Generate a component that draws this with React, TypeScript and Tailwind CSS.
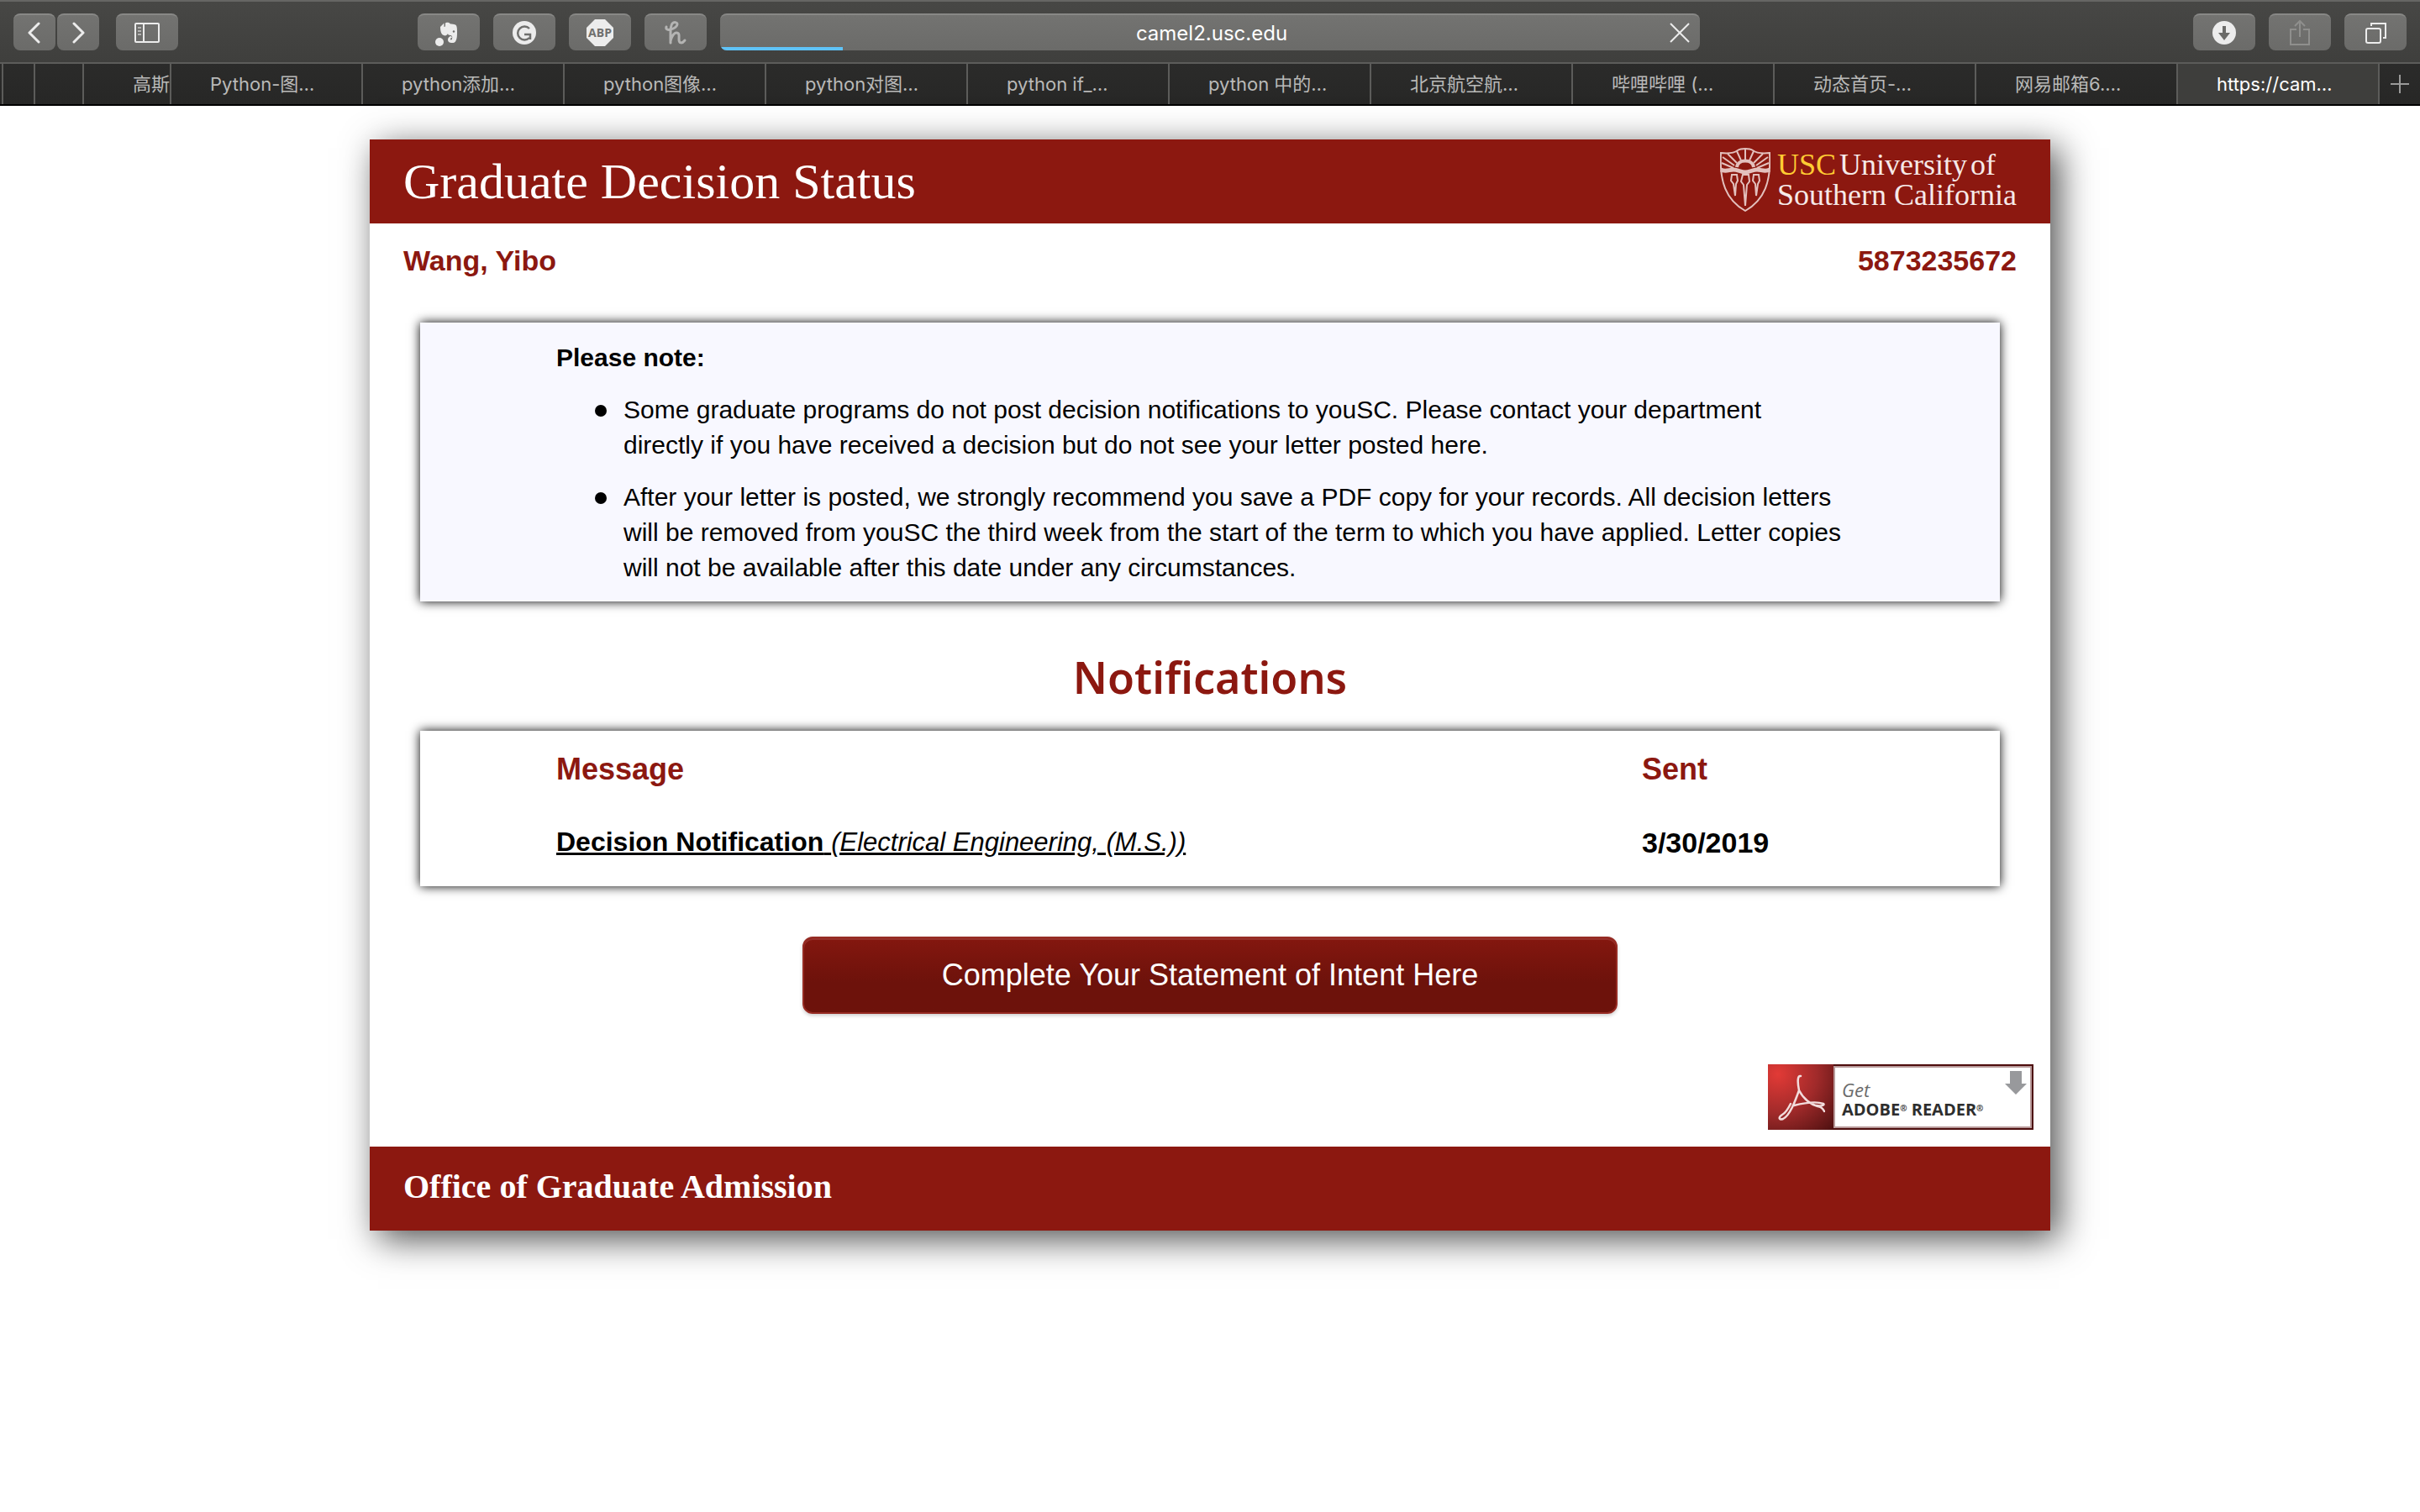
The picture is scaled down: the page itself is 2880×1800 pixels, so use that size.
import type { ReactNode } from "react";

const toolBtn =
  "flex h-11 items-center justify-center rounded-lg border-t-2 border-[#888886] bg-gradient-to-b from-[#737371] to-[#6b6b69] text-[#ececec]";

function ToolButton({ label, className, children }: { label: string; className: string; children: ReactNode }) {
  return (
    <button type="button" aria-label={label} className={`${toolBtn} ${className}`}>
      {children}
    </button>
  );
}

const tabs = [
  "Python-图…",
  "python添加…",
  "python图像…",
  "python对图…",
  "python if_…",
  "python 中的…",
  "北京航空航…",
  "哔哩哔哩 (…",
  "动态首页-…",
  "网易邮箱6.…",
  "https://cam…",
];

function Toolbar() {
  return (
    <div className="flex h-[74px] items-center border-t-2 border-[#666664] bg-gradient-to-b from-[#474745] to-[#3f3f3d] px-4">
      <div className="flex gap-[2px]">
        <ToolButton label="Back" className="w-[50px]">
          <svg width="18" height="26" viewBox="0 0 18 26" fill="none" stroke="currentColor" strokeWidth="3" strokeLinecap="round" strokeLinejoin="round">
            <path d="M14 2L3 13l11 11" />
          </svg>
        </ToolButton>
        <ToolButton label="Forward" className="w-[50px]">
          <svg width="18" height="26" viewBox="0 0 18 26" fill="none" stroke="currentColor" strokeWidth="3" strokeLinecap="round" strokeLinejoin="round">
            <path d="M4 2l11 11L4 24" />
          </svg>
        </ToolButton>
      </div>
      <ToolButton label="Show sidebar" className="ml-5 w-[74px]">
        <svg width="32" height="26" viewBox="0 0 32 26" fill="none" stroke="currentColor" strokeWidth="2">
          <rect x="2" y="2" width="28" height="22" rx="1" />
          <path d="M12 2v22" />
          <path d="M5 7h4M5 11h4M5 15h4" stroke="#b4b4b3" />
        </svg>
      </ToolButton>
      <div className="ml-[285px] flex gap-4">
        <ToolButton label="Clipper" className="w-[74px]">
          <svg width="36" height="32" viewBox="-18 -16 36 32" fill="currentColor">
            <path d="M-4 -11.500c1-1 5-1 6 1 2 0 4 0 6 1 2 1 2 5 2 8 0 5 0 9-2 12-1 1-2 1.500-4 1.500-3 0-5-1-5-4 0-2 2-4 4-4l1 2c-2 0-2 1-2 2 1 1 2 0 2-1 1-3-1-4-2-4-2 0-3-1-3-2-1 2-3 3-5 2-3-1-4-5-4-10h5c1 0 1-1 1-4.500z" />
            <path d="M-10 -7l4.500-4.500v4.500z" />
            <circle cx="6" cy="-1.500" r="1.200" fill="#6f6f6d" />
            <circle cx="-11" cy="11" r="5" />
          </svg>
        </ToolButton>
        <ToolButton label="Grammar check" className="w-[74px]">
          <svg width="30" height="30" viewBox="0 0 30 30">
            <circle cx="15" cy="15" r="14" fill="currentColor" />
            <path d="M21 10a8 8 0 1 0 0 11M15 17h7v6" fill="none" stroke="#6f6f6d" strokeWidth="2.500" />
          </svg>
        </ToolButton>
        <ToolButton label="Ad block" className="w-[74px]">
          <svg width="32" height="32" viewBox="0 0 32 32">
            <path d="M10 0h12l10 10v12L22 32H10L0 22V10z" fill="currentColor" />
            <text x="16" y="21" textAnchor="middle" fontFamily="Open Sans, sans-serif" fontWeight="700" fontSize="14" fill="#6f6f6d">ABP</text>
          </svg>
        </ToolButton>
        <ToolButton label="Coupons" className="w-[74px]">
          <svg width="30" height="32" viewBox="-15 -16 30 32" fill="none" stroke="#b4b4b3" strokeWidth="3" strokeLinecap="round" strokeLinejoin="round">
            <path d="M-11 -7c-1 3 2 4 5 3 5-1 8-4 8-6 0-3-4-3-6-1-2 3-2 7-2 11v12M-6 10c1-5 4-10 7-10 4 0 3 4 3 8 0 5 4 5 7 1" />
          </svg>
        </ToolButton>
      </div>
      <div className="relative mx-4 flex h-11 w-[1166px] items-center overflow-hidden rounded-lg border-t-2 border-[#888886] bg-gradient-to-b from-[#737371] to-[#6b6b69]">
        <input
          aria-label="Address"
          defaultValue="camel2.usc.edu"
          className="h-full w-full bg-transparent pl-1 text-center font-['Inter','Liberation_Sans',sans-serif] text-2xl text-white outline-none"
        />
        <button type="button" aria-label="Stop loading" className="absolute right-3 text-[#ececec]">
          <svg width="24" height="24" viewBox="0 0 24 24" fill="none" stroke="currentColor" strokeWidth="2">
            <path d="M1 1l22 22M23 1L1 23" />
          </svg>
        </button>
        <div className="absolute bottom-0 left-0 h-1 w-[146px] bg-[#5fc3f8]" />
      </div>
      <div className="ml-auto flex gap-4">
        <ToolButton label="Downloads" className="w-[74px]">
          <svg width="28" height="28" viewBox="0 0 28 28">
            <circle cx="14" cy="14" r="14" fill="currentColor" />
            <path d="M12 6h4v8h5l-7 9-7-9h5z" fill="#6b6b69" />
          </svg>
        </ToolButton>
        <ToolButton label="Share" className="w-[74px]">
          <svg width="24" height="32" viewBox="0 0 24 32" fill="none" stroke="#8f8f8d" strokeWidth="2">
            <path d="M8 12H1v18h22V12h-7M12 21V2M6 8l6-6 6 6" />
          </svg>
        </ToolButton>
        <ToolButton label="Show all tabs" className="w-[74px]">
          <svg width="26" height="26" viewBox="0 0 26 26" fill="none" stroke="currentColor" strokeWidth="2">
            <rect x="2" y="8" width="17" height="17" rx="2" />
            <path d="M8 5V2h17v17h-3" />
          </svg>
        </ToolButton>
      </div>
    </div>
  );
}

function TabBar() {
  return (
    <nav className="flex h-[52px] border-t-2 border-b-2 border-t-[#5c5c5a] border-b-black bg-gradient-to-b from-[#2b2b2a] to-[#272726] font-['Inter','Noto_Sans_CJK_SC',sans-serif] text-[22px] text-[#b9b9b8]">
      <div className="w-1 border-r-2 border-[#5c5c5a]" />
      <div className="w-[38px] border-r-2 border-[#5c5c5a]" />
      <div className="w-[58px] border-r-2 border-[#5c5c5a]" />
      <button type="button" className="flex w-[104px] items-center justify-end overflow-hidden border-r-2 border-[#5c5c5a] whitespace-nowrap">
        高斯
      </button>
      {tabs.map((t, i) => (
        <button
          key={t}
          type="button"
          className={`min-w-0 overflow-hidden border-r-2 border-[#5c5c5a] pl-[46px] text-left whitespace-nowrap ${
            i === 0 ? "w-[228px]" : "flex-1"
          } ${i === tabs.length - 1 ? "bg-[#3e3e3c] text-white" : ""}`}
        >
          {t}
        </button>
      ))}
      <button type="button" aria-label="New tab" className="flex w-12 items-center justify-center">
        <svg width="22" height="22" viewBox="0 0 22 22" stroke="#9a9a99" strokeWidth="2">
          <path d="M11 0v22M0 11h22" />
        </svg>
      </button>
    </nav>
  );
}

function UscLogo() {
  return (
    <div className="flex items-start gap-2">
      <svg width="60" height="76" viewBox="0 0 60 76" fill="none" stroke="#e3c0bd" strokeWidth="2">
        <path d="M1 6c9 1 16 0 20-3 3-2 6-2 9-2s6 0 9 2c4 3 11 4 20 3 2 34-6 56-29 69C7 62-1 40 1 6z" />
        <path d="M1 26c5 3 10 0 15 0s9 3 14 3 9-3 14-3 10 3 15 0" strokeWidth="5" />
        <path d="M20 23c1-10 19-10 20 0" strokeWidth="4" />
        <path d="M30 14V2M25 15L20 4M35 15l5-11M20 18L9 7M40 18L51 7M17 21L3 11M43 21l14-10M16 24L2 18M44 24l14-6" strokeWidth="2" />
        <path d="M14 32h6l1 7-2 4-1 14-2-14-3-4zM27 32h7l1 8-3 4-2 25-2-25-3-4zM40 32h6l1 7-2 4-2 14-1-14-3-4z" />
      </svg>
      <div className="pt-[2px] font-['Liberation_Serif',serif] text-[36px] leading-9 whitespace-nowrap text-[#f6e9e8]">
        <div className="flex gap-1">
          <span className="text-[#ffcc33]">USC</span>
          <span>University</span>
          <span>of</span>
        </div>
        <div>Southern California</div>
      </div>
    </div>
  );
}

function AdobeBadge() {
  return (
    <a href="#reader" className="flex h-[78px] w-[316px] bg-[#4d0d0d] p-[2px] pl-0">
      <span className="-my-[2px] flex w-[78px] items-center justify-center bg-[radial-gradient(circle_at_15%_15%,#e23a36,#a02a2a_50%,#4d1010)]">
        <svg width="58" height="58" viewBox="0 0 58 58" fill="none" stroke="#f2dcdc" strokeWidth="2.500" strokeLinecap="round">
          <path d="M29 4c-4-1-4 7-2 17-5 14-11 30-19 34-5 2-6-2-1-5 4-2 7-7 10-13M27 21c5 10 14 17 22 19 6 1 7 4 8 6M21 39c12-3 27-5 35-2 2 2-3 3-9 2" />
        </svg>
      </span>
      <span className="relative flex-1 border-2 border-[#b89a9a] bg-white pt-[14px] pl-2 font-['Open_Sans',sans-serif] whitespace-nowrap">
        <span className="block text-[22px] leading-6 text-[#6b6b6b] italic">Get</span>
        <span className="block text-[20px] leading-6 font-bold text-[#2e2e2e]">
          ADOBE<sup className="text-[10px]">®</sup> READER<sup className="text-[10px]">®</sup>
        </span>
        <svg className="absolute top-1 right-1" width="26" height="28" viewBox="0 0 26 28" fill="#98999c">
          <path d="M6 0h14v15h6L13 28 0 15h6z" />
        </svg>
      </span>
    </a>
  );
}

const bullet =
  "relative mt-5 before:absolute before:top-[15px] before:-left-[34px] before:size-[14px] before:rounded-full before:bg-black";

export default function App() {
  return (
    <div className="min-h-screen bg-white font-['Liberation_Sans',sans-serif] text-black">
      <Toolbar />
      <TabBar />
      <main className="mx-auto mt-10 w-full max-w-[2000px] shadow-[10px_10px_40px_rgba(0,0,0,0.7)]">
        <header className="flex h-[100px] justify-between bg-[#8c1810] px-10 pt-[10px]">
          <h1 className="font-['Liberation_Serif',serif] text-[60px] leading-[80px] text-white">Graduate Decision Status</h1>
          <UscLogo />
        </header>
        <div className="mx-[2px] bg-white pb-5">
          <div className="flex justify-between px-[38px] pt-6 text-[34px] leading-10 font-bold text-[#8c1810]">
            <span>Wang, Yibo</span>
            <span>5873235672</span>
          </div>
          <section className="mx-[58px] mt-[54px] bg-[#f8f8ff] px-[162px] pt-[21px] pb-[19px] text-[30px] leading-[42px] shadow-[0_0_12px_#000]">
            <p className="font-bold">Please note:</p>
            <ul className="pl-20">
              <li className={bullet}>
                Some graduate programs do not post decision notifications to youSC. Please contact your department
                <br />
                directly if you have received a decision but do not see your letter posted here.
              </li>
              <li className={bullet}>
                After your letter is posted, we strongly recommend you save a PDF copy for your records. All decision letters will be removed from youSC the third week from the start of the term to which you have applied. Letter copies will not be available after this date under any circumstances.
              </li>
            </ul>
          </section>
          <h2 className="mt-14 text-center font-['Noto_Sans',sans-serif] text-[52px] leading-[68px] font-semibold text-[#8c1810]">Notifications</h2>
          <section className="mx-[58px] mt-[30px] px-[162px] pt-6 pb-[30px] shadow-[0_0_12px_#000]">
            <table className="w-full text-left text-[32px] leading-[44px]">
              <thead>
                <tr className="text-[36px] text-[#8c1810]">
                  <th className="pb-[42px]">Message</th>
                  <th className="w-[264px] pb-[42px]">Sent</th>
                </tr>
              </thead>
              <tbody>
                <tr>
                  <td>
                    <a href="#letter" className="underline">
                      <b>Decision Notification</b> <i className="text-[31px]">(Electrical Engineering, (M.S.))</i>
                    </a>
                  </td>
                  <td className="text-[34px] font-bold">3/30/2019</td>
                </tr>
              </tbody>
            </table>
          </section>
          <button
            type="button"
            className="mx-auto mt-[60px] block h-[92px] w-[970px] rounded-xl border-2 border-[#962b23] bg-gradient-to-b from-[#84170f] to-[#6d120b] to-60% text-[36px] text-white shadow-[inset_0_2px_0_#96302a,0_2px_4px_rgba(0,0,0,0.2)]"
          >
            Complete Your Statement of Intent Here
          </button>
          <div className="mt-[60px] flex justify-end pr-[18px]">
            <AdobeBadge />
          </div>
        </div>
        <footer className="h-[100px] bg-[#8c1810] px-10 pt-6 font-['Liberation_Serif',serif] text-[40px] leading-[48px] font-bold text-white">
          Office of Graduate Admission
        </footer>
      </main>
    </div>
  );
}
